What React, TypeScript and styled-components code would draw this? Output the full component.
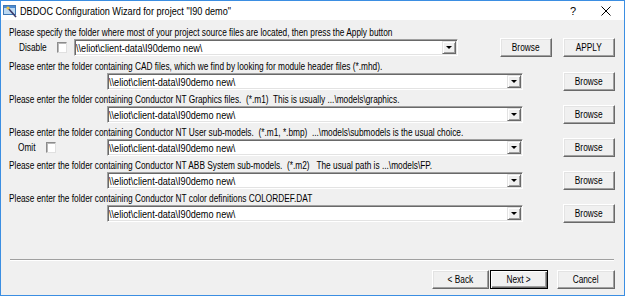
import React from 'react';
import styled, { createGlobalStyle, css } from 'styled-components';

const Global = createGlobalStyle`
  html, body { margin: 0; padding: 0; background: #f0f0f0; }
  body { width: 625px; height: 296px; overflow: hidden; }
`;

const FONT = `"Liberation Sans", Arial, sans-serif`;

/* the dialog font is a narrow system face: squeeze Arial metrics horizontally */
const squeeze = (origin: string) => css`
  display: inline-block;
  transform: scaleX(0.83);
  transform-origin: ${origin};
`;

const Window = styled.div`
  box-sizing: border-box;
  width: 625px;
  height: 296px;
  border: 1px solid #3b8ee2;
  background: #f0f0f0;
  display: flex;
  flex-direction: column;
  font-family: ${FONT};
  color: #000;
`;

const TitleBar = styled.div`
  height: 19px;
  background: #fff;
  display: flex;
  align-items: center;
  padding-left: 2px;
  flex-shrink: 0;
`;

const Title = styled.span`
  font-size: 11px;
  margin-left: 2px;
  white-space: nowrap;
  ${squeeze('left center')}
`;

const TitleButtons = styled.div`
  margin-left: auto;
  display: flex;
  align-items: center;
  height: 100%;
`;

const TitleBtn = styled.div<{ $w: number }>`
  width: ${(p) => p.$w}px;
  height: 100%;
  display: flex;
  align-items: center;
  justify-content: center;
  font-size: 11px;
`;

const Body = styled.div`
  flex: 1;
  display: flex;
  flex-direction: column;
  padding: 7px 9px 6px 8px;
`;

const Section = styled.div<{ $extra?: number }>`
  height: 33px;
  margin-bottom: ${(p) => p.$extra ?? 0}px;
  display: flex;
  flex-direction: column;
`;

const Prompt = styled.div`
  height: 12px;
  line-height: 12px;
  font-size: 10px;
  white-space: pre;
  ${squeeze('left center')}
`;

const Line = styled.div`
  height: 17px;
  display: flex;
  align-items: center;
`;

const Lead = styled.div<{ $w: number; $pad: number; $labelW: number }>`
  width: ${(p) => p.$w}px;
  flex-shrink: 0;
  box-sizing: border-box;
  padding-left: ${(p) => p.$pad}px;
  display: grid;
  grid-template-columns: ${(p) => p.$labelW}px 10px;
  align-items: center;
  font-size: 10px;
`;

const LeadLabel = styled.span`
  white-space: nowrap;
  ${squeeze('left center')}
`;

const Check = styled.span`
  box-sizing: border-box;
  width: 10px;
  height: 11px;
  background: #fff;
  border: 1px solid;
  border-color: #8c8c8c #e0e0e0 #e0e0e0 #8c8c8c;
  box-shadow: inset 1px 1px 0 #b8b8b8;
`;

const Combo = styled.div<{ $w: number }>`
  box-sizing: border-box;
  width: ${(p) => p.$w}px;
  height: 17px;
  background: #fff;
  border: 1px solid;
  border-color: #a0a0a0 #ffffff #ffffff #a0a0a0;
  box-shadow: inset 1px 1px 0 #696969, inset -1px -1px 0 #e3e3e3;
  padding: 1px;
  display: flex;
  align-items: center;
  flex-shrink: 0;
`;

const ComboText = styled.span`
  flex: 1;
  min-width: 0;
  font-size: 11px;
  white-space: nowrap;
  ${squeeze('left center')}
`;

const DropBtn = styled.span`
  box-sizing: border-box;
  width: 14px;
  height: 13px;
  flex-shrink: 0;
  background: #f0f0f0;
  border: 1px solid;
  border-color: #e3e3e3 #696969 #696969 #e3e3e3;
  box-shadow: inset 1px 1px 0 #fff, inset -1px -1px 0 #a0a0a0;
  display: flex;
  align-items: center;
  justify-content: center;
  &::after {
    content: '';
    width: 0;
    height: 0;
    border-left: 3px solid transparent;
    border-right: 3px solid transparent;
    border-top: 3px solid #000;
  }
`;

const Buttons = styled.div`
  margin-left: auto;
  display: flex;
  align-items: center;
  gap: 11px;
`;

const Button = styled.button<{ $w: number; $default?: boolean; $ml?: number }>`
  box-sizing: border-box;
  width: ${(p) => p.$w}px;
  height: 19px;
  padding: 0;
  margin: 0 0 0 ${(p) => p.$ml ?? 0}px;
  background: #f0f0f0;
  font-family: ${FONT};
  font-size: 10px;
  color: #000;
  border: 1px solid;
  border-color: #ffffff #696969 #696969 #ffffff;
  box-shadow: inset -1px -1px 0 #a0a0a0, inset 1px 1px 0 #e3e3e3;
  white-space: nowrap;
  ${(p) =>
    p.$default &&
    css`
      border-color: #000;
      box-shadow: inset 1px 1px 0 #fff, inset -1px -1px 0 #696969,
        inset -2px -2px 0 #a0a0a0;
    `}
`;

const ButtonLabel = styled.span`
  ${squeeze('center center')}
`;

const Footer = styled.div`
  margin-top: auto;
  display: flex;
  flex-direction: column;
`;

const Separator = styled.div`
  height: 0;
  border-top: 1px solid #a0a0a0;
  border-bottom: 1px solid #fff;
  margin-left: 1px;
  margin-right: 1px;
`;

const FooterRow = styled.div`
  margin-top: 9px;
  height: 19px;
  display: flex;
  justify-content: flex-end;
  align-items: center;
`;

const AppIcon = () => (
  <svg width="15" height="14" viewBox="0 0 15 14">
    <rect x="0.5" y="1.5" width="12" height="9" fill="#bcd9f2" stroke="#3f78b5" />
    <rect x="1" y="2" width="11" height="2" fill="#4d8ad0" />
    <line x1="5" y1="4" x2="13" y2="13" stroke="#3a3a6a" strokeWidth="1.6" />
    <circle cx="5" cy="4" r="1.6" fill="#f2c23c" />
  </svg>
);

const CloseIcon = () => (
  <svg width="10" height="10" viewBox="0 0 10 10">
    <path d="M0.5 0.5 L9.5 9.5 M9.5 0.5 L0.5 9.5" stroke="#000" strokeWidth="1" />
  </svg>
);

const PATH = '\\\\eliot\\client-data\\I90demo new\\';

type Row = { prompt: string; lead?: string };

const rows: Row[] = [
  { prompt: 'Please enter the folder containing CAD files, which we find by looking for module header files (*.mhd).' },
  { prompt: 'Please enter the folder containing Conductor NT Graphics files.  (*.m1)  This is usually ...\\models\\graphics.' },
  { prompt: 'Please enter the folder containing Conductor NT User sub-models.  (*.m1, *.bmp)  ...\\models\\submodels is the usual choice.', lead: 'Omit' },
  { prompt: 'Please enter the folder containing Conductor NT ABB System sub-models.  (*.m2)   The usual path is ...\\models\\FP.' },
  { prompt: 'Please enter the folder containing Conductor NT color definitions COLORDEF.DAT' },
];

const PathCombo = ({ w }: { w: number }) => (
  <Combo $w={w}>
    <ComboText>{PATH}</ComboText>
    <DropBtn />
  </Combo>
);

const Btn = ({ w, children, ...rest }: { w: number; children: React.ReactNode; $default?: boolean; $ml?: number }) => (
  <Button $w={w} {...rest}>
    <ButtonLabel>{children}</ButtonLabel>
  </Button>
);

export default function App() {
  return (
    <>
      <Global />
      <Window>
        <TitleBar>
          <AppIcon />
          <Title>DBDOC Configuration Wizard for project "I90 demo"</Title>
          <TitleButtons>
            <TitleBtn $w={30}>?</TitleBtn>
            <TitleBtn $w={36}>
              <CloseIcon />
            </TitleBtn>
          </TitleButtons>
        </TitleBar>
        <Body>
          <Section $extra={1}>
            <Prompt>
              Please specify the folder where most of your project source files are located, then press the Apply button
            </Prompt>
            <Line>
              <Lead $w={65} $pad={10} $labelW={38}>
                <LeadLabel>Disable</LeadLabel>
                <Check />
              </Lead>
              <PathCombo w={384} />
              <Buttons>
                <Btn w={52}>Browse</Btn>
                <Btn w={52}>APPLY</Btn>
              </Buttons>
            </Line>
          </Section>
          {rows.map((r, i) => (
            <Section key={i}>
              <Prompt>{r.prompt}</Prompt>
              <Line>
                <Lead $w={98} $pad={9} $labelW={28}>
                  {r.lead && (
                    <>
                      <LeadLabel>{r.lead}</LeadLabel>
                      <Check />
                    </>
                  )}
                </Lead>
                <PathCombo w={416} />
                <Buttons>
                  <Btn w={52}>Browse</Btn>
                </Buttons>
              </Line>
            </Section>
          ))}
          <Footer>
            <Separator />
            <FooterRow>
              <Btn w={57}>&lt; Back</Btn>
              <Btn w={58} $default $ml={1}>
                Next &gt;
              </Btn>
              <Btn w={58} $ml={9}>
                Cancel
              </Btn>
            </FooterRow>
          </Footer>
        </Body>
      </Window>
    </>
  );
}
